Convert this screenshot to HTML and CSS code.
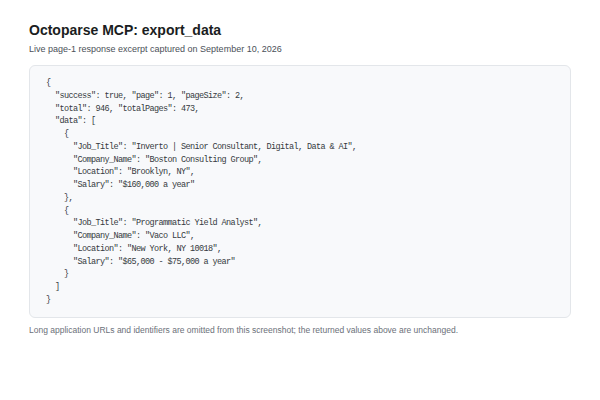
FILE: index.html
```html
<!DOCTYPE html>
<html lang="en">
<head>
<meta charset="utf-8">
<title>Octoparse MCP: export_data</title>
<link rel="stylesheet" href="styles.css">
</head>
<body>
<main class="page">
  <h1 class="title">Octoparse MCP: export_data</h1>
  <p class="subtitle">Live page-1 response excerpt captured on September 10, 2026</p>
  <pre class="code">{
  "success": true, "page": 1, "pageSize": 2,
  "total": 946, "totalPages": 473,
  "data": [
    {
      "Job_Title": "Inverto | Senior Consultant, Digital, Data &amp; AI",
      "Company_Name": "Boston Consulting Group",
      "Location": "Brooklyn, NY",
      "Salary": "$160,000 a year"
    },
    {
      "Job_Title": "Programmatic Yield Analyst",
      "Company_Name": "Vaco LLC",
      "Location": "New York, NY 10018",
      "Salary": "$65,000 - $75,000 a year"
    }
  ]
}</pre>
  <p class="note">Long application URLs and identifiers are omitted from this screenshot; the returned values above are unchanged.</p>
</main>
</body>
</html>
```
FILE: styles.css
```css
html, body {
  margin: 0;
  padding: 0;
  background: #ffffff;
}
body {
  font-family: "Liberation Sans", Arial, sans-serif;
  color: #1f2328;
}
.page {
  padding: 21px 29px 0 29px;
  width: 542px;
}
.title {
  margin: 0;
  font-size: 14px;
  line-height: 18px;
  font-weight: 700;
  color: #1a1d21;
}
.subtitle {
  margin: 4px 0 0 0;
  font-size: 9px;
  line-height: 12px;
  color: #4b5058;
}
.code {
  margin: 10px 0 0 0;
  box-sizing: border-box;
  width: 542px;
  height: 253px;
  padding: 11px 16px 10px 16px;
  background: #f8f9fb;
  border: 1px solid #e3e6ea;
  border-radius: 6px;
  font-family: "Liberation Mono", "DejaVu Sans Mono", monospace;
  font-size: 8.5px;
  letter-spacing: -0.6px;
  line-height: 12.75px;
  color: #353a40;
  white-space: pre;
  overflow: hidden;
}
.note {
  margin: 6px 0 0 0;
  font-size: 8.5px;
  line-height: 12px;
  color: #6b7079;
}
```
